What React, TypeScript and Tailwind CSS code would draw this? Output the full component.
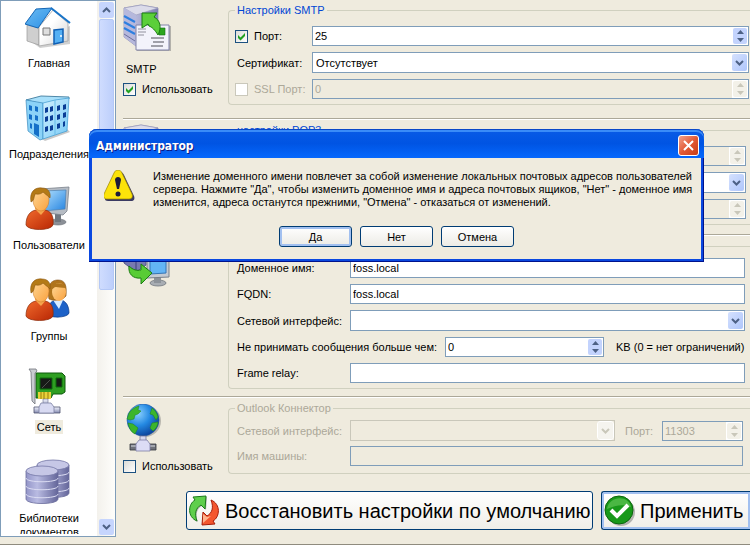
import { useState } from 'react';
import type { ReactNode } from 'react';

function HouseIcon() {
  return (
    <svg width="48" height="48" viewBox="0 0 48 48">
      <defs>
        <linearGradient id="roof" x1="0" y1="0" x2="1" y2="1">
          <stop offset="0" stopColor="#6dbcf2" />
          <stop offset="1" stopColor="#2a8fe6" />
        </linearGradient>
        <linearGradient id="wall" x1="0" y1="0" x2="1" y2="1">
          <stop offset=".4" stopColor="#ffffff" />
          <stop offset="1" stopColor="#d4d4d4" />
        </linearGradient>
      </defs>
      <path d="M4 36l11 8 30-4V22z" fill="#777" opacity=".35" />
      <path d="M2 21l12 3v17L2 37z" fill="#cfcfcf" stroke="#9a9a9a" strokeWidth=".7" />
      <path d="M14 23L28 6l15 13v18l-29 5z" fill="url(#wall)" stroke="#9c9c9c" strokeWidth=".7" />
      <path d="M0 20L11 5l16-1-14 20z" fill="url(#roof)" stroke="#1566b4" />
      <path d="M26 4l19 15" stroke="#1874c8" strokeWidth="2" />
      <path d="M18 24h7v7h-7z" fill="#dedede" stroke="#777" />
      <path d="M29 26l9-1v13l-9 2z" fill="#55b0f4" stroke="#0f5fb4" strokeWidth="1.5" />
      <circle cx="36" cy="32" r="1" fill="#fff" />
    </svg>
  );
}

function BuildingIcon() {
  return (
    <svg width="48" height="48" viewBox="0 0 48 48">
      <defs>
        <linearGradient id="front" x1="0" y1="0" x2="1" y2="1">
          <stop offset="0" stopColor="#d4f1ff" />
          <stop offset="1" stopColor="#74c8f5" />
        </linearGradient>
      </defs>
      <path d="M6 37l14 9 25-9-3-3z" fill="#777" opacity=".4" />
      <path d="M1 5l15-4 28 1v2L18 9z" fill="#a8e0fb" stroke="#4f88a8" />
      <path d="M1 5l17 3v36l-3 1L3 36z" fill="#8bd3f8" stroke="#3c8bbd" strokeWidth=".7" />
      <path d="M18 8l12-3 14-2-2 33-24 8z" fill="url(#front)" stroke="#3c9ad0" strokeWidth=".7" />
      <path d="M30 5v35" stroke="#66bce9" />
      <g fill="#1470c8">
        <path d="M4 10l3 1v5l-3-1zM10 11l3 1v5l-3-1zM4 19l3 1v5l-3-1zM10 20l3 1v5l-3-1zM5 28l2 1v5l-2-1z" />
        <path d="M9 28l5 2v12l-5-3z" />
      </g>
      <g fill="#0a3d96">
        <path d="M20 13l3-1v5l-3 1zM25 12l3-1v5l-3 1zM32 11l3-1v5l-3 1zM38 10l3-1v5l-3 1zM20 22l3-1v5l-3 1zM25 21l3-1v5l-3 1zM32 20l3-1v5l-3 1zM38 18l3-1v5l-3 1zM20 32l3-1v5l-3 1zM25 31l3-1v5l-3 1zM32 29l3-1v5l-3 1zM38 27l2-1v5l-2 1z" />
      </g>
    </svg>
  );
}

function Person({ x, shirt }: { x: number; shirt: string }) {
  return (
    <g transform={`translate(${x} 0)`}>
      <path d="M0 39c0-9 4-14 10-15h9c6 1 9 6 8 15-2 6-25 6-27 0z" fill={shirt} stroke="#8a2a08" strokeWidth=".7" />
      <path d="M9 23l6 6 5-6v-3H9z" fill="#f6a54c" />
      <ellipse cx="15" cy="14" rx="8" ry="11" fill="url(#skin)" stroke="#c97724" strokeWidth=".5" />
      <path d="M5 16C3 5 10 1 16 2c6 0 9 4 8 10-3-3-5-4-7-6-3 3-6 2-8 2-1 3-1 7-4 8z" fill="#b47a16" stroke="#8a5510" strokeWidth=".6" />
    </g>
  );
}

function PersonDefs() {
  return (
    <defs>
      <linearGradient id="skin" x1="0" y1="0" x2="1" y2="1">
        <stop offset="0" stopColor="#ffd896" />
        <stop offset="1" stopColor="#f9a13e" />
      </linearGradient>
      <linearGradient id="orange" x1="0" y1="0" x2="1" y2="1">
        <stop offset="0" stopColor="#f06a2c" />
        <stop offset="1" stopColor="#b82604" />
      </linearGradient>
      <linearGradient id="screen" x1="0" y1="0" x2="1" y2="1">
        <stop offset="0" stopColor="#b4e2ff" />
        <stop offset="1" stopColor="#2483e0" />
      </linearGradient>
    </defs>
  );
}

function UserIcon() {
  return (
    <svg width="48" height="48" viewBox="0 0 48 48">
      <PersonDefs />
      <ellipse cx="33" cy="36" rx="8" ry="3" fill="#8b9097" stroke="#666c73" strokeWidth=".6" />
      <path d="M30 28h6v8h-6z" fill="#70777f" />
      <path d="M15 3l29-2-2 24-4 4-23-3z" fill="#b6bcc4" stroke="#7a828b" strokeWidth=".8" />
      <path d="M18 5l23-1-1 19-22 2z" fill="url(#screen)" stroke="#4c7fb0" strokeWidth=".7" />
      <Person x={1} shirt="url(#orange)" />
    </svg>
  );
}

function GroupIcon() {
  return (
    <svg width="48" height="48" viewBox="0 0 48 48">
      <PersonDefs />
      <path d="M22 36c0-8 4-12 9-13h5c5 1 8 6 8 13-1 5-21 6-22 0z" fill="#1d62c8" stroke="#0c3a86" strokeWidth=".7" />
      <path d="M28 23l6 9 4-9z" fill="#d8ecff" />
      <path d="M24 22C21 7 27 3 33 3c7 0 9 5 8 16-4 5-13 5-17 3z" fill="#b0741c" stroke="#85501a" strokeWidth=".6" />
      <ellipse cx="34" cy="15" rx="7" ry="9" fill="url(#skin)" />
      <path d="M26 13c0-8 13-9 15-2-5 0-8-1-10-1-2 0-3 2-5 3z" fill="#b0741c" />
      <Person x={1} shirt="url(#orange)" />
    </svg>
  );
}

function NetCardIcon() {
  return (
    <svg width="48" height="48" viewBox="0 0 48 48">
      <defs>
        <linearGradient id="pipe" x1="0" y1="0" x2="0" y2="1">
          <stop offset="0" stopColor="#f4f6ff" />
          <stop offset="1" stopColor="#8389b0" />
        </linearGradient>
      </defs>
      <path d="M11 5h26l3 3v16l-3 2h-9l-2 4H11z" fill="#2f9e22" stroke="#0f5a0c" />
      <path d="M4 1h7l1 2-2 2v31l-3-3L6 4z" fill="#c9ccd1" stroke="#71757b" strokeWidth=".8" />
      <path d="M15 10h12v11H15zM31 10h6v9h-6z" fill="#171b17" stroke="#0b6b0b" />
      <path d="M17 20l8-8" stroke="#4c524c" />
      <path d="M13 24h13v7H13z" fill="#e8d23b" />
      <path d="M16 24v7M19 24v7M23 24v7" stroke="#9a7c0a" strokeWidth="1" />
      <path d="M18 31h5v8h-5z" fill="url(#pipe)" stroke="#686d8e" strokeWidth=".6" />
      <path d="M9 39h26v6H9z" fill="url(#pipe)" stroke="#4f536e" strokeWidth=".8" />
      <path d="M16 35h10l3 4v6H14v-6z" fill="#d8daf2" stroke="#7b80a2" strokeWidth=".8" />
    </svg>
  );
}

function Cylinder({ x, y }: { x: number; y: number }) {
  return (
    <g transform={`translate(${x} ${y})`}>
      <path d="M0 5v28c0 6 32 6 32 0V5z" fill="url(#cyl)" stroke="#6a6c9c" strokeWidth=".8" />
      <ellipse cx="16" cy="5" rx="16" ry="5" fill="#c6c7e6" stroke="#7476a6" strokeWidth=".8" />
      <path d="M0 12c0 5 32 5 32 0M0 20c0 5 32 5 32 0M0 28c0 5 32 5 32 0" fill="none" stroke="#dcddf3" strokeWidth="1" />
    </g>
  );
}

function DatabaseIcon() {
  return (
    <svg width="48" height="48" viewBox="0 0 48 48">
      <defs>
        <linearGradient id="cyl">
          <stop offset="0" stopColor="#9395c8" />
          <stop offset=".35" stopColor="#b9bbe2" />
          <stop offset="1" stopColor="#64669a" />
        </linearGradient>
      </defs>
      <Cylinder x={12} y={1} />
      <Cylinder x={1} y={7} />
    </svg>
  );
}

function ServerShape() {
  return (
    <g>
      <defs>
        <linearGradient id="srv">
          <stop offset="0" stopColor="#d4d5ee" />
          <stop offset="1" stopColor="#7f81b4" />
        </linearGradient>
      </defs>
      <path d="M1 5L18 2l17 3v30l-22 8L1 34z" fill="url(#srv)" stroke="#8183ac" strokeWidth=".7" />
      <path d="M1 5L18 2l17 3-22 7z" fill="#dcdcea" stroke="#9899b8" strokeWidth=".6" />
      <path d="M1 5l12 7v31L1 34z" fill="#b6b8dc" />
      <path d="M1 13l11 6M1 19l11 6M1 25l11 6" stroke="#2d7fe0" strokeWidth="2" />
      <path d="M1 31l11 7" stroke="#6b6e9c" strokeWidth="1" />
    </g>
  );
}

function SmtpIcon() {
  return (
    <svg width="48" height="48" viewBox="0 0 48 48">
      <ServerShape />
      <path d="M14 23h34v26H14z" fill="#777" opacity=".5" />
      <path d="M13 22h33v25H13z" fill="#f3f3fb" stroke="#8183a8" />
      <path d="M15 26h8M15 29h8M15 32h6" stroke="#b3b3bd" strokeWidth="1.5" />
      <path d="M28 35h13M30 39h11M28 43h12" stroke="#85858f" strokeWidth="1.5" />
      <path d="M36 25h6v7h-6z" fill="#2ba51e" stroke="#167010" strokeWidth=".6" />
      <path d="M19 10h15l-3 4c6 3 8 10 4 18-3-5-6-8-9-9l-1-2-6 4z" fill="#5bcf3a" stroke="#1b7d12" />
    </svg>
  );
}

function RelayIcon() {
  return (
    <svg width="48" height="48" viewBox="0 0 48 48">
      <path d="M1 16l9-5 13 4v11l-10 7-12-9z" fill="#7779b0" stroke="#55578a" />
      <path d="M1 16l12 5 10-6" fill="none" stroke="#b7b9e0" />
      <path d="M13 33V21" stroke="#3c3f78" />
      <ellipse cx="35" cy="44" rx="8" ry="3" fill="#a8adb3" stroke="#6f757c" strokeWidth=".8" />
      <path d="M31 38h7v6h-7z" fill="#8c9299" />
      <path d="M24 15l22-1v24l-22 1z" fill="#c4cad2" stroke="#78808a" />
      <path d="M27 18l16-1v17l-16 1z" fill="#62b4f5" stroke="#3475b5" />
      <path d="M6 27c4 4 8 5 12 4v-6l11 9-11 11v-6C10 40 5 35 6 27z" fill="#58cc35" stroke="#1b7d12" />
    </svg>
  );
}

function GlobeIcon() {
  return (
    <svg width="40" height="50" viewBox="0 0 40 50">
      <defs>
        <radialGradient id="globe" cx=".35" cy=".3" r=".75">
          <stop offset="0" stopColor="#8ad0ff" />
          <stop offset=".5" stopColor="#2489e2" />
          <stop offset="1" stopColor="#0a3f97" />
        </radialGradient>
      </defs>
      <circle cx="22" cy="17" r="16" fill="#555" opacity=".35" />
      <circle cx="20" cy="16" r="16" fill="url(#globe)" stroke="#1c56a4" strokeWidth=".6" />
      <path d="M6 9c2-3 6-6 10-7l-1 4 3 1-3 3-3 1-1 4-4 1-3-1zM5 19l5 1 5 4-3 6c-4-2-6-6-7-11zM29 4c3 2 5 5 6 9l-2 3-3-5-3-1zM29 19l6-1c0 3-2 7-5 9l-3-3z" fill="#3cb52c" stroke="#1e851a" strokeWidth=".5" />
      <path d="M17 32h6v8h-6z" fill="#d5d6ee" stroke="#686a8c" strokeWidth=".7" />
      <path d="M7 40h26v6H7z" fill="#6f727b" stroke="#34363c" strokeWidth=".8" />
      <path d="M8 42h24" stroke="#d8dbe2" />
      <path d="M16 36h8l3 4v7H13v-7z" fill="#dcdcf5" stroke="#7d7fa6" strokeWidth=".8" />
    </svg>
  );
}

function RestoreIcon() {
  const arrow = 'M8 26C-2 22-1 9 6 5L4 2l13-1-1 13-4-4C7 13 5 18 8 26z';
  return (
    <svg width="32" height="32" viewBox="0 0 32 32" className="shrink-0">
      <path d={arrow} transform="translate(1 1)" fill="#555" opacity=".4" />
      <path d={arrow} fill="#5fcf4c" stroke="#1c7a1a" />
      <path d={arrow} transform="rotate(180 15 15.500)" fill="#f4562e" stroke="#a51c08" />
      <path d="M14 19l4 3 4-1-8 7z" fill="#ffb28c" />
    </svg>
  );
}

function OkIcon() {
  return (
    <svg width="32" height="32" viewBox="0 0 32 32" className="shrink-0">
      <circle cx="17" cy="17" r="14" fill="#555" opacity=".4" />
      <circle cx="15" cy="15" r="14" fill="#18991a" stroke="#0b650e" />
      <path d="M3 14C5 0 25 0 27 12c-8-3-15-2-24 2z" fill="#6ccc5f" opacity=".6" />
      <path d="M7 15l6 6L24 10" fill="none" stroke="#fff" strokeWidth="4" />
    </svg>
  );
}

function WarningIcon() {
  return (
    <svg width="32" height="32" viewBox="0 0 32 32" className="shrink-0">
      <path d="M16 2c2 0 3 1 4 3l10 21c1 3 0 5-3 5H4c-2 0-3-1-3-2z" fill="#3a3a62" />
      <path d="M14 0c2 0 3 1 4 3l10 21c1 3 0 5-3 5H3c-3 0-4-2-3-5L10 3c1-2 2-3 4-3z" fill="#fce30a" stroke="#9b8500" strokeWidth=".7" />
      <path d="M11 10c0-4 6-4 6 0l-2 9h-2z" fill="#1b1b3a" />
      <circle cx="14" cy="24" r="2.500" fill="#1b1b3a" />
    </svg>
  );
}

function Chevron({ up, className = 'text-[#4d6185]' }: { up?: boolean; className?: string }) {
  return (
    <svg width="9" height="6" viewBox="0 0 9 6" className={className} aria-hidden="true">
      <path d={up ? 'M1 5l3.500-3.500L8 5' : 'M1 1l3.500 3.500L8 1'} fill="none" stroke="currentColor" strokeWidth="2" />
    </svg>
  );
}

function Arrow({ up }: { up?: boolean }) {
  return (
    <svg width="7" height="4" viewBox="0 0 7 4" aria-hidden="true">
      <path d={up ? 'M0 4L3.500 0 7 4z' : 'M0 0l3.500 4L7 0z'} fill="currentColor" />
    </svg>
  );
}

function Check({ label, on, disabled }: { label: string; on?: boolean; disabled?: boolean }) {
  const [checked, setChecked] = useState(!!on);
  return (
    <label className={`flex items-center gap-[6px] ${disabled ? 'text-[#aca899]' : ''}`}>
      <span className="relative flex">
        <input
          type="checkbox"
          checked={checked}
          disabled={disabled}
          onChange={(e) => setChecked(e.target.checked)}
          className="h-[13px] w-[13px] appearance-none border border-[#1c5180] bg-linear-to-br from-[#dcdcd7] to-white disabled:border-[#cac8bb] disabled:bg-white disabled:bg-none"
        />
        {checked && (
          <svg width="13" height="13" viewBox="0 0 13 13" className="pointer-events-none absolute inset-0">
            <path d="M3 5v3l2.500 2.500L10 6V3L5.500 7.500z" fill="#21a121" />
          </svg>
        )}
      </span>
      <span>{label}</span>
    </label>
  );
}

function TextField({ id, value = '', disabled }: { id: string; value?: string; disabled?: boolean }) {
  return (
    <input
      id={id}
      type="text"
      defaultValue={value}
      disabled={disabled}
      className="h-5 w-full min-w-0 border border-[#7f9db9] bg-white px-[2px] disabled:bg-transparent disabled:text-[#aca899]"
    />
  );
}

function SpinField({ id, label, value, disabled, className = 'w-full' }: { id: string; label: string; value: number; disabled?: boolean; className?: string }) {
  const [num, setNum] = useState(value);
  const btn = disabled ? 'bg-[#f3f1e9] text-[#c9c7ba]' : 'bg-[#c3d3fd] text-[#4d6185]';
  return (
    <div className={`flex h-5 border border-[#7f9db9] ${disabled ? '' : 'bg-white'} ${className}`}>
      <input
        id={id}
        type="text"
        aria-label={label}
        value={num}
        disabled={disabled}
        onChange={(e) => setNum(Number(e.target.value) || 0)}
        className="min-w-0 flex-1 px-[2px] disabled:text-[#aca899]"
      />
      <div className="flex w-4 flex-col bg-white p-px">
        <button type="button" aria-label="Больше" disabled={disabled} onClick={() => setNum(num + 1)} className={`flex flex-1 items-center justify-center rounded-t-xs ${btn}`}>
          <Arrow up />
        </button>
        <button type="button" aria-label="Меньше" disabled={disabled} onClick={() => setNum(num - 1)} className={`flex flex-1 items-center justify-center rounded-b-xs ${btn}`}>
          <Arrow />
        </button>
      </div>
    </div>
  );
}

function SelectField({ id, value = '', disabled, className = 'w-full' }: { id: string; value?: string; disabled?: boolean; className?: string }) {
  return (
    <div className={`relative flex h-[21px] border ${disabled ? 'border-[#c9c7ba]' : 'border-[#7f9db9] bg-white'} ${className}`}>
      <select id={id} disabled={disabled} defaultValue={value} className="w-full appearance-none pl-[3px]">
        <option>{value}</option>
      </select>
      <span className={`pointer-events-none absolute inset-y-px right-px flex w-[15px] items-center justify-center rounded-xs ${disabled ? 'bg-[#f5f4ef] outline outline-white' : 'bg-linear-to-br from-[#d5e1fe] to-[#afc6fb]'}`}>
        <Chevron className={disabled ? 'text-[#c9c7ba]' : 'text-[#4d6185]'} />
      </span>
    </div>
  );
}

function Group({ title, disabled, className, children }: { title: string; disabled?: boolean; className: string; children: ReactNode }) {
  return (
    <fieldset className={`min-w-0 flex-1 rounded-l-[4px] border border-r-0 border-[#d0d0bf] pl-[6px] ${className}`}>
      <legend className={`px-[2px] leading-[14px] ${disabled ? 'text-[#aca899]' : 'text-[#0046d5]'}`}>{title}</legend>
      {children}
    </fieldset>
  );
}

function Divider() {
  return <hr className="h-[2px] border-0 border-t border-[#aca899] bg-white" />;
}

function FieldLabel({ htmlFor, disabled, children }: { htmlFor: string; disabled?: boolean; children: ReactNode }) {
  return (
    <label htmlFor={htmlFor} className={`px-[2px] whitespace-nowrap ${disabled ? 'text-[#aca899]' : ''}`}>
      {children}
    </label>
  );
}

function ServerGroup({ name, title, portOn, port, className }: { name: string; title: string; portOn?: boolean; port: number; className: string }) {
  return (
    <Group title={title} className={`pt-[9px] pb-[5px] ${className}`}>
      <div className="grid grid-cols-[77px_1fr] items-center gap-y-[6px]">
        <Check label="Порт:" on={portOn} />
        <SpinField id={`${name}-port`} label="Порт" value={port} disabled={!portOn} />
        <FieldLabel htmlFor={`${name}-cert`}>Сертификат:</FieldLabel>
        <SelectField id={`${name}-cert`} value="Отсутствует" />
        <Check label="SSL Порт:" disabled />
        <SpinField id={`${name}-ssl`} label="SSL Порт" value={0} disabled />
      </div>
    </Group>
  );
}

const NAV = [
  { label: 'Главная', icon: HouseIcon },
  { label: 'Подразделения', icon: BuildingIcon },
  { label: 'Пользователи', icon: UserIcon },
  { label: 'Группы', icon: GroupIcon },
  { label: 'Сеть', icon: NetCardIcon },
  { label: 'Библиотеки документов', icon: DatabaseIcon },
];

function Sidebar() {
  const [active, setActive] = useState('Сеть');
  const scrollBtn = 'flex h-4 w-[15px] items-center justify-center rounded-xs bg-[#c6d5fd]';
  return (
    <aside className="flex h-[537px] w-[116px] shrink-0 border border-[#7f9db9] bg-white">
      <nav className="h-[533px] w-24 overflow-hidden pt-[3px]">
        {NAV.map(({ label, icon: Icon }) => (
          <button key={label} type="button" onClick={() => setActive(label)} className="flex h-[91px] w-full flex-col items-center gap-1">
            <Icon />
            <span className={`px-[2px] leading-[14px] ${active === label ? 'bg-[#efebde]' : ''}`}>{label}</span>
          </button>
        ))}
      </nav>
      <div className="flex flex-1 flex-col items-center gap-px bg-linear-to-r from-[#f3f1ec] to-[#fefefb] py-px">
        <button type="button" aria-label="Вверх" className={scrollBtn}>
          <Chevron up />
        </button>
        <div className="h-[271px] w-[15px] rounded-xs border border-[#b4c8f6] bg-linear-to-r from-[#cfdcfe] to-[#bdcffb]" />
        <button type="button" aria-label="Вниз" className={`mt-auto ${scrollBtn}`}>
          <Chevron />
        </button>
      </div>
    </aside>
  );
}

function MessageBox({ onClose }: { onClose: () => void }) {
  const btn = 'h-[21px] w-[73px] rounded-[3px] border border-[#003c74] bg-linear-to-b from-white to-[#ecebe5]';
  return (
    <div role="dialog" aria-labelledby="box-title" className="absolute top-[129px] left-[89px] w-[615px] rounded-t-[8px] border-b border-[#00138c] bg-[#0a48e0] px-[3px] pb-[2px] shadow-[inset_-1px_0_#00138c]">
      <div className="-mx-[3px] flex h-[29px] items-center justify-between rounded-t-[8px] bg-linear-to-b from-[#0a5be6] via-[#0054e3] to-[#0668fd] pt-1 pr-[5px] pl-[7px] shadow-[inset_0_1px_#0a48c8,inset_0_3px_#3a8cf8]">
        <h2 id="box-title" className="font-['DejaVu_Sans_Condensed','DejaVu_Sans',sans-serif] text-[12px] font-bold text-white [text-shadow:1px_1px_#0a1883]">Администратор</h2>
        <button type="button" aria-label="Закрыть" onClick={onClose} className="flex h-[21px] w-[21px] items-center justify-center rounded-[3px] border border-white bg-linear-to-br from-[#f0a08a] via-[#e25a35] to-[#c83c12]">
          <svg width="11" height="11" viewBox="0 0 11 11">
            <path d="M1 1l9 9M10 1l-9 9" stroke="#fff" strokeWidth="2" />
          </svg>
        </button>
      </div>
      <div className="bg-[#efebde] pt-3 pb-3">
        <div className="flex gap-[17px] pl-3">
          <WarningIcon />
          <p className="leading-[13px] whitespace-nowrap">
            Изменение доменного имени повлечет за собой изменение локальных почтовых адресов пользователей
            <br />
            сервера. Нажмите "Да", чтобы изменить доменное имя и адреса почтовых ящиков, "Нет" - доменное имя
            <br />
            изменится, адреса останутся прежними, "Отмена" - отказаться от изменений.
          </p>
        </div>
        <div className="mt-[17px] flex justify-center gap-2">
          <button type="button" onClick={onClose} className={`${btn} shadow-[inset_0_0_0_2px_#a2c0f0]`}>Да</button>
          <button type="button" onClick={onClose} className={btn}>Нет</button>
          <button type="button" onClick={onClose} className={btn}>Отмена</button>
        </div>
      </div>
    </div>
  );
}

export default function App() {
  const [boxOpen, setBoxOpen] = useState(true);

  return (
    <div className="relative overflow-hidden border-b border-[#8f8b7e] bg-[#efebde] pb-[7px] font-['Liberation_Sans',Arial,sans-serif] text-[11px] leading-[14px] text-black">
      <div className="flex">
        <Sidebar />
        <main className="min-w-0 flex-1 pt-[3px] pl-[7px]">
          <section className="mb-[13px] flex">
            <div className="w-[105px] shrink-0">
              <SmtpIcon />
              <p className="mt-[11px] pl-[3px]">SMTP</p>
              <div className="mt-[6px]">
                <Check label="Использовать" on />
              </div>
            </div>
            <ServerGroup name="smtp" title="Настройки SMTP" portOn port={25} className="pr-px" />
          </section>
          <Divider />

          <section className="mt-[3px] mb-[9px] flex">
            <div className="w-[105px] shrink-0">
              <SmtpIcon />
              <p className="mt-[11px] pl-[3px]">POP3</p>
              <div className="mt-[6px]">
                <Check label="Использовать" />
              </div>
            </div>
            <ServerGroup name="pop" title="настройки POP3" port={110} className="pr-1" />
          </section>
          <Divider />

          <section className="mt-[3px] mb-[7px] flex">
            <div className="w-[105px] shrink-0">
              <RelayIcon />
            </div>
            <Group title="Настройки домена" className="pt-[5px] pr-[5px] pb-[5px]">
              <div className="grid grid-cols-[115px_1fr] items-center gap-y-[6px]">
                <FieldLabel htmlFor="domain">Доменное имя:</FieldLabel>
                <TextField id="domain" value="foss.local" />
                <FieldLabel htmlFor="fqdn">FQDN:</FieldLabel>
                <TextField id="fqdn" value="foss.local" />
                <FieldLabel htmlFor="iface">Сетевой интерфейс:</FieldLabel>
                <SelectField id="iface" />
                <div className="col-span-2 grid grid-cols-[210px_159px_1fr] items-center">
                  <FieldLabel htmlFor="limit">Не принимать сообщения больше чем:</FieldLabel>
                  <SpinField id="limit" label="Размер сообщения" value={0} />
                  <span className="pl-3 whitespace-nowrap">KB (0 = нет ограничений)</span>
                </div>
                <FieldLabel htmlFor="relay">Frame relay:</FieldLabel>
                <TextField id="relay" />
              </div>
            </Group>
          </section>
          <Divider />

          <section className="mt-[3px] mb-[17px] flex">
            <div className="w-[105px] shrink-0 pt-[3px]">
              <GlobeIcon />
              <div className="mt-[5px]">
                <Check label="Использовать" />
              </div>
            </div>
            <Group title="Outlook Коннектор" disabled className="pt-[5px] pr-[7px] pb-[7px]">
              <div className="grid grid-cols-[115px_1fr] items-center gap-y-[5px]">
                <FieldLabel htmlFor="out-iface" disabled>Сетевой интерфейс:</FieldLabel>
                <div className="flex items-center">
                  <SelectField id="out-iface" disabled className="flex-1" />
                  <span className="w-[47px] pl-[10px] text-[#aca899]">Порт:</span>
                  <SpinField id="out-port" label="Порт" value={11303} disabled className="w-[81px]" />
                </div>
                <FieldLabel htmlFor="machine" disabled>Имя машины:</FieldLabel>
                <TextField id="machine" disabled />
              </div>
            </Group>
          </section>

          <div className="flex gap-2 pl-[63px] text-[20px] leading-6 whitespace-nowrap">
            <button type="button" className="flex h-[39px] w-[407px] shrink-0 items-center gap-1 rounded-[3px] border border-[#003c74] bg-linear-to-b from-white to-[#f0eee8] pl-[2px]">
              <RestoreIcon />
              Восстановить настройки по умолчанию
            </button>
            <button type="button" className="flex h-[39px] flex-1 items-center gap-1 rounded-l-[3px] border border-r-0 border-[#003c74] bg-linear-to-b from-white to-[#f0eee8] pl-[2px] shadow-[inset_0_0_0_2px_#a2c0f0]">
              <OkIcon />
              Применить
            </button>
          </div>
        </main>
      </div>
      {boxOpen && <MessageBox onClose={() => setBoxOpen(false)} />}
    </div>
  );
}
